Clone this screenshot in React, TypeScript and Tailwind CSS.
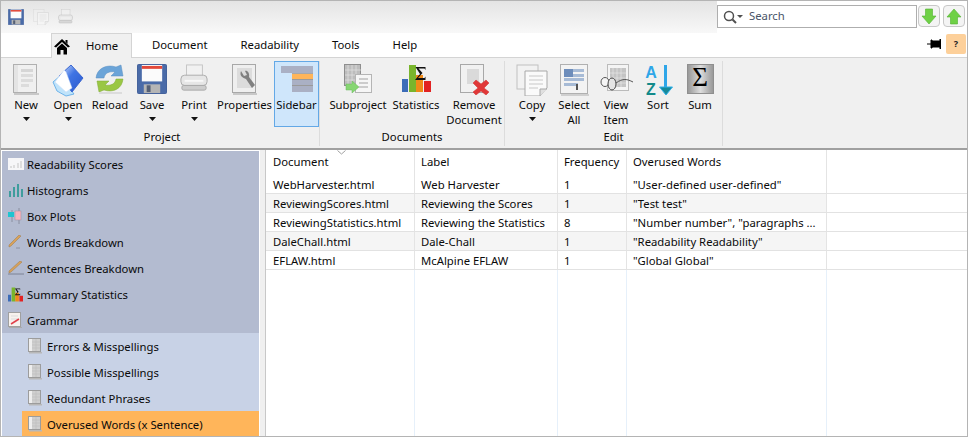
import React from "react";

const font = { fontFamily: '"Noto Sans", "Open Sans", sans-serif' };

function Caret() {
  return <svg width="7" height="4" viewBox="0 0 7 4" className="block"><path d="M0 0h7L3.5 4z" fill="#111" /></svg>;
}

function Ic({ w, h, vb, children }: { w: number; h: number; vb?: string; children: React.ReactNode }) {
  return <svg width={w} height={h} viewBox={vb ?? `0 0 ${w} ${h}`}>{children}</svg>;
}

function NewIcon() {
  return (
    <Ic w={26} h={31}>
      <rect x="0.5" y="0.5" width="23" height="28" fill="#f0f0f0" stroke="#b0b0b0" />
      <rect x="1" y="1" width="4" height="27" fill="#e4e4e4" />
      <rect x="8" y="5" width="12" height="3" fill="#d6d6d6" />
      <rect x="8" y="10" width="12" height="3" fill="#dcdcdc" />
      <rect x="8" y="15" width="12" height="3" fill="#dcdcdc" />
      <rect x="8" y="20" width="8" height="3" fill="#dcdcdc" />
      <rect x="1" y="29" width="25" height="2" fill="#c8c8c8" />
    </Ic>
  );
}
function OpenIcon() {
  return (
    <Ic w={32} h={33}>
      <defs><linearGradient id="og" x1="0" y1="0" x2="1" y2="1"><stop offset="0" stopColor="#dfeaff" /><stop offset="0.45" stopColor="#3f74e4" /><stop offset="1" stopColor="#2a58cc" /></linearGradient></defs>
      <path d="M1 18 L8 12 L22 30 L14 32 L5 27z" fill="#bfe3fa" stroke="#6fb4ea" />
      <path d="M19 1 L31 14 L20 28 L7 12z" fill="url(#og)" stroke="#3a66d0" />
      <path d="M3 18 L12 6 L14 8 L20 24 L14 28z" fill="#fff" stroke="#c8dcf8" strokeWidth=".5" />
    </Ic>
  );
}
function ReloadIcon() {
  return (
    <Ic w={30} h={31}>
      <path d="M1 14 C2 4 12 0 21 3 L26 1 L28 12 L16 12 L20 8 C14 7 10 9 9 14z" fill="#6ba4d8" stroke="#5a8fc0" strokeWidth=".5" />
      <path d="M28 15 C27 25 18 29 9 26 L4 28 L2 17 L14 17 L10 21 C16 22 20 20 21 15z" fill="#9ac744" stroke="#7ea832" strokeWidth=".5" />
      <rect x="4" y="28" width="23" height="2" fill="#dcdcdc" />
    </Ic>
  );
}
function SaveIcon({ s = 30 }: { s?: number }) {
  return (
    <svg width={s} height={s} viewBox="0 0 31 31">
      <rect x="0.5" y="0.5" width="30" height="30" rx="1" fill="#4a6ba8" stroke="#3f5e99" />
      <rect x="5" y="1" width="21" height="17" fill="#fbfbfb" />
      <rect x="5" y="2" width="21" height="3" fill="#e2483a" />
      <rect x="7" y="21" width="17" height="9" fill="#b5b5b5" />
      <rect x="10" y="22" width="4" height="7" fill="#545f75" />
    </svg>
  );
}
function PrintIcon({ s = 28 }: { s?: number }) {
  return (
    <svg width={s} height={s} viewBox="0 0 30 30">
      <rect x="7" y="1" width="17" height="13" fill="#f1f1f1" stroke="#c4c4c4" />
      <rect x="1" y="12" width="28" height="11" rx="4" fill="#e6e6e6" stroke="#a9a9a9" />
      <rect x="2" y="23" width="26" height="5" rx="2" fill="#cdcdcd" stroke="#a8a8a8" />
      <rect x="5" y="17" width="20" height="2" fill="#f8f8f8" />
    </svg>
  );
}
function PropertiesIcon() {
  return (
    <Ic w={25} h={31}>
      <rect x="0.5" y="0.5" width="23" height="28" fill="#efefef" stroke="#a8a8a8" />
      <rect x="5" y="4" width="15" height="20" fill="#dcdcdc" />
      <path d="M9 7 C7 12 11 14 14 15 L20 24 L23 21 L17 13 C18 9 15 6 13 7 L15 11 L12 12z" fill="#808080" />
      <rect x="1" y="29" width="24" height="2" fill="#c8c8c8" />
    </Ic>
  );
}
function SidebarIcon() {
  return (
    <div className="flex flex-col w-[32px] h-[26px] items-end mt-[2px]">
      <div className="w-full h-[7px] bg-[#aab0c4]" />
      <div className="w-[21px] h-[6px] bg-[#ffb55a] border-t border-[#a8a8a8]" />
      <div className="w-[21px] h-[6px] bg-[#aab0c4] border-t border-[#9a9a9a]" />
      <div className="w-[21px] h-[7px] bg-[#aab0c4] border-t border-[#9a9a9a]" />
    </div>
  );
}
function SubprojectIcon() {
  return (
    <Ic w={28} h={29}>
      <rect x="0.5" y="0.5" width="16" height="21" fill="#bdbdbd" stroke="#8e8e8e" />
      <path d="M4 1v21M8 1v21M12 1v21M1 6h16M1 11h16M1 16h16" stroke="#e4e4e4" strokeWidth=".7" />
      <rect x="11.5" y="10.5" width="16" height="18" fill="#f6f6f6" stroke="#b5b5b5" />
      <rect x="15" y="14" width="9" height="2" fill="#ccc" />
      <rect x="15" y="18" width="9" height="2" fill="#ccc" />
      <rect x="15" y="22" width="9" height="2" fill="#ccc" />
      <path d="M2 20h6v-3l7 6-7 6v-3H2z" fill="#86d672" stroke="#68b85c" strokeWidth=".5" />
    </Ic>
  );
}
function StatisticsIcon({ s = 29 }: { s?: number }) {
  return (
    <div className="relative shrink-0" style={{ width: s, height: s }}>
      <svg width={s} height={s} viewBox="0 0 29 29" className="block">
        <rect x="0" y="15" width="6" height="13" fill="#3c6cb8" />
        <rect x="7" y="1" width="7" height="27" fill="#79b52c" />
        <rect x="14" y="11" width="7" height="17" fill="#f08a18" />
        <rect x="22" y="17" width="7" height="11" fill="#e22222" />
        <path d="M13.5 3h10v3l-1-1.500h-6l4 4.500-4.500 5h6.500l1-1.500v3.500h-10.500l5-6z" fill="#111" />
      </svg>
    </div>
  );
}
function RemoveIcon() {
  return (
    <Ic w={29} h={31}>
      <rect x="0.5" y="0.5" width="23" height="28" fill="#f1f1f1" stroke="#a8a8a8" />
      <rect x="7" y="5" width="12" height="15" fill="#dadada" />
      <path d="M13 19l3-3 5 4 5-4 3 3-5 5 5 4-3 3-5-4-5 4-3-3 5-4z" fill="#e03838" stroke="#d02c2c" strokeWidth=".5" />
    </Ic>
  );
}
function CopyIcon({ s = 32 }: { s?: number }) {
  return (
    <svg width={s} height={s} viewBox="0 0 32 32">
      <rect x="1" y="1" width="21" height="24" fill="#f2f2f2" stroke="#c0c0c0" />
      <path d="M9 7h22v17l-7 8H9z" fill="#fafafa" stroke="#a8a8a8" />
      <path d="M13 12h14M13 16h14M13 20h14M13 24h9" stroke="#c8c8c8" strokeWidth="1.2" />
      <path d="M24 32v-7h7" fill="#e0e0e0" stroke="#a8a8a8" />
    </svg>
  );
}
function SelectAllIcon() {
  return (
    <Ic w={29} h={32}>
      <rect x="0.5" y="0.5" width="27" height="29" fill="#f3f3f3" stroke="#b0b0b0" />
      <rect x="4" y="5" width="9" height="8" fill="#6d8dbb" />
      <rect x="13" y="5" width="11" height="3" fill="#a7bbd6" />
      <rect x="13" y="10" width="11" height="3" fill="#a7bbd6" />
      <rect x="4" y="14" width="20" height="3" fill="#a7bbd6" />
      <rect x="4" y="19" width="14" height="3" fill="#a7bbd6" />
      <rect x="16" y="20" width="2" height="6" fill="#555" />
      <rect x="1" y="30" width="28" height="2" fill="#cfcfcf" />
    </Ic>
  );
}
function ViewItemIcon() {
  return (
    <Ic w={33} h={28}>
      <rect x="7.5" y="0.5" width="21" height="26" fill="#f4f4f4" stroke="#bbb" />
      <rect x="10" y="4" width="16" height="19" fill="#c4c4c4" />
      <path d="M13 4v19M17 4v19M21 4v19M10 9h16M10 14h16M10 19h16" stroke="#e6e6e6" strokeWidth=".7" />
      <ellipse cx="5" cy="18" rx="4" ry="4.500" fill="#f5f5f5" stroke="#555" />
      <ellipse cx="12" cy="20" rx="4" ry="6" fill="#e4e4e4" stroke="#444" />
      <path d="M16 19 C23 14 27 15 33 18" fill="none" stroke="#555" />
    </Ic>
  );
}
function SortIcon() {
  return (
    <div className="w-[29px] h-[33px] flex items-start">
      <div className="w-[15px] flex flex-col items-center font-bold text-[16px] leading-[17px]" style={{ fontFamily: '"Liberation Sans", sans-serif' }}>
        <span className="text-[#2fa6e8]">A</span>
        <span className="text-[#128a8a]">Z</span>
      </div>
      <Ic w={14} h={33}>
        <rect x="5" y="1" width="3" height="23" fill="#2fa6e8" />
        <path d="M0.500 23h13l-6.500 8z" fill="#178a9a" stroke="#2fb0ea" />
      </Ic>
    </div>
  );
}
function SumIcon() {
  return (
    <div className="w-[27px] h-[30px] border border-[#8f8f8f] flex items-center justify-center bg-gradient-to-r from-[#999] via-[#ddd] to-[#999]">
      <span className="text-[27px] leading-none text-black pb-[3px]" style={{ fontFamily: '"Liberation Serif", serif' }}>Σ</span>
    </div>
  );
}
function HomeIcon() {
  return (
    <svg width="16" height="17" viewBox="0 0 16 17">
      <path d="M8 1 L16 8.5 L14 9.500 L8 4 L2 9.500 L0 8.500z" fill="#000" />
      <path d="M11.500 2h2v4l-2-2z" fill="#000" />
      <path d="M3 10 L8 5.500 L13 10 V16.500 H9.500 V12 H6.500 V16.500 H3z" fill="#000" />
    </svg>
  );
}
function ArrowButton({ up }: { up?: boolean }) {
  return (
    <div className="w-[22px] h-[22px] rounded-[4px] border border-[#c8c8c8] bg-[#f4f4f4] flex items-center justify-center">
      <svg width="16" height="17" viewBox="0 0 16 17">
        {up
          ? <path d="M8 1l7 8h-3.500v7h-7V9H1z" fill="#6fd146" stroke="#52b030" strokeWidth=".6" />
          : <path d="M4.500 1h7v7H15l-7 8-7-8h3.500z" fill="#6fd146" stroke="#52b030" strokeWidth=".6" />}
      </svg>
    </div>
  );
}

function RibbonButton({ label, icon, w, caret, active }: { label: React.ReactNode; icon: React.ReactNode; w: string; caret?: boolean; active?: boolean }) {
  return (
    <div className={`${w} h-[66px] flex flex-col items-center shrink-0 ${active ? "bg-[#cfe6fb] border border-[#63a8e6]" : ""}`}>
      <div className={`h-[35px] flex items-start justify-center ${active ? "pt-[2px]" : "pt-[3px]"}`}>{icon}</div>
      <div className={`text-center text-[11.3px] leading-[15px] text-[#0a0a0a] whitespace-nowrap ${active ? "" : "mt-[1px]"}`}>{label}</div>
      {caret && <div className="mt-[5px]"><Caret /></div>}
    </div>
  );
}

function Group({ title, children, w }: { title: string; children: React.ReactNode; w: string }) {
  return (
    <div className={`${w} flex flex-col items-center border-r border-[#dcdcdc] h-[85px] shrink-0`}>
      <div className="flex h-[66px] w-full">{children}</div>
      <div className="text-[11.3px] leading-[16px] text-[#0a0a0a] mt-[2px]">{title}</div>
    </div>
  );
}

function DocGlyph() {
  return (
    <svg width="14" height="16" viewBox="0 0 14 16">
      <rect x="0.500" y="0.500" width="12" height="13" fill="#cfcfcf" stroke="#9c9c9c" />
      <rect x="1" y="1" width="3" height="12" fill="#eeeeee" />
      <path d="M4 4h8M4 7h8M4 10h8M8 1v12" stroke="#bdbdbd" strokeWidth=".7" />
      <rect x="1" y="14" width="13" height="1.500" fill="#b8b8b8" />
    </svg>
  );
}

const mainIcons: Record<string, React.ReactNode> = {
  scores: (
    <svg width="16" height="12" viewBox="0 0 16 12">
      <rect width="16" height="12" fill="#f6f6f8" />
      <path d="M3 10V8M6 10V7M10 10V5M13 10V3" stroke="#c4c4c4" strokeWidth="1" />
    </svg>
  ),
  hist: (
    <svg width="16" height="14" viewBox="0 0 16 14">
      <path d="M1 8h2v6H1zM5 4h2v10H5zM9 1h2v13H9zM13 6h2v8h-2z" fill="#3f9d9d" />
    </svg>
  ),
  box: (
    <svg width="14" height="16" viewBox="0 0 14 16">
      <path d="M4 2v12M11 0v16" stroke="#8a8fa0" />
      <rect x="0" y="4" width="6" height="5" fill="#1fc4d0" />
      <rect x="7" y="3" width="6" height="9" fill="#f7b3bc" stroke="#9a8e9e" strokeWidth=".5" />
    </svg>
  ),
  words: (
    <svg width="14" height="14" viewBox="0 0 14 14">
      <path d="M1 10L11 0l2 1L3 11l-2 1z" fill="#d9a25a" stroke="#9c7a4c" strokeWidth=".5" />
      <path d="M8 13h4" stroke="#8c92a4" />
    </svg>
  ),
  sentences: (
    <svg width="16" height="14" viewBox="0 0 16 14">
      <path d="M1 10L12 0l2 1L3 11l-2 1z" fill="#d9a25a" stroke="#9c7a4c" strokeWidth=".5" />
      <path d="M0 13h16" stroke="#7c8294" />
    </svg>
  ),
  summary: <StatisticsIcon s={15} />,
  grammar: (
    <svg width="14" height="16" viewBox="0 0 14 16">
      <rect x="0.500" y="0.500" width="12" height="14" fill="#f7f2ee" stroke="#a0a0a0" />
      <path d="M3 4h7M3 7h7" stroke="#ddd" />
      <path d="M3 12L11 7" stroke="#e0404a" strokeWidth="1.500" />
      <rect x="1" y="15" width="13" height="1" fill="#aaa" />
    </svg>
  ),
};

function SideMain({ icon, label }: { icon: string; label: string }) {
  return (
    <div className="h-[26px] flex items-center">
      <div className="w-[25px] pl-[6px] shrink-0 flex items-center justify-start">{mainIcons[icon]}</div>
      <span className="text-[11.3px] text-[#0a0a0a] whitespace-nowrap pt-[2px]">{label}</span>
    </div>
  );
}

function SideSub({ label, selected }: { label: string; selected?: boolean }) {
  return (
    <div className={`h-[26px] ml-[20px] flex items-center ${selected ? "bg-[#ffb55a]" : ""}`}>
      <div className="w-[25px] pl-[6px] shrink-0 flex items-center"><DocGlyph /></div>
      <span className="text-[11.3px] text-[#0a0a0a] whitespace-nowrap pt-[2px]">{label}</span>
    </div>
  );
}

const rows = [
  ["WebHarvester.html", "Web Harvester", "1", "\"User-defined user-defined\""],
  ["ReviewingScores.html", "Reviewing the Scores", "1", "\"Test test\""],
  ["ReviewingStatistics.html", "Reviewing the Statistics", "8", "\"Number number\", \"paragraphs ..."],
  ["DaleChall.html", "Dale-Chall", "1", "\"Readability Readability\""],
  ["EFLAW.html", "McAlpine EFLAW", "1", "\"Global Global\""],
];

const cols = ["w-[149px] pl-[7px]", "w-[143px] pl-[6px]", "w-[69px] pl-[6px]", "w-[200px] pl-[6px]"];

export default function App() {
  return (
    <div className="w-[968px] h-[437px] overflow-hidden bg-white border border-[#b4b4b4] flex flex-col" style={font}>
      <div className="h-[32px] shrink-0 flex items-start">
        <div className="w-[716px] h-[32px] bg-gradient-to-b from-[#e4e4e4] to-[#f8f8f8] flex items-center gap-[9px] pl-[7px] pb-[1px]">
          <SaveIcon s={16} />
          <div className="opacity-40"><CopyIcon s={16} /></div>
          <div className="opacity-70"><PrintIcon s={15} /></div>
        </div>
        <div className="flex-1 flex items-start gap-[1px] mt-[4px]">
          <div className="w-[200px] h-[23px] border border-[#aeaeae] flex items-center pl-[5px] bg-white">
            <svg width="20" height="14" viewBox="0 0 20 14">
              <circle cx="6" cy="6" r="4.500" fill="none" stroke="#505050" strokeWidth="1.500" />
              <path d="M9.500 9.500L13 13" stroke="#505050" strokeWidth="2" />
              <path d="M14 5h6l-3 3z" fill="#505050" />
            </svg>
            <span className="ml-[6px] text-[11.3px] text-[#4a5568]">Search</span>
          </div>
          <ArrowButton />
          <div className="ml-[2px]"><ArrowButton up /></div>
        </div>
      </div>

      <div className="h-[25px] shrink-0 flex items-stretch border-b border-[#d4d4d4] bg-white relative">
        <div className="w-[50px]" />
        <div className="w-[81px] h-[25px] bg-[#f0f0f0] border-t border-x border-[#d4d4d4] flex items-center pl-[2px] relative">
          <HomeIcon />
          <span className="ml-[16px] text-[11.3px] text-[#0a0a0a] pt-[1px]">Home</span>
        </div>
        <span className="ml-[20px] self-center text-[11.3px] text-[#0a0a0a] pt-[1px]">Document</span>
        <span className="ml-[33px] self-center text-[11.3px] text-[#0a0a0a] pt-[1px]">Readability</span>
        <span className="ml-[33px] self-center text-[11.3px] text-[#0a0a0a] pt-[1px]">Tools</span>
        <span className="ml-[33px] self-center text-[11.3px] text-[#0a0a0a] pt-[1px]">Help</span>
        <div className="ml-auto flex items-center gap-[5px] pb-[3px]">
          <svg width="14" height="10" viewBox="0 0 14 10">
            <path d="M0 5h3M3 5h2M4 1h1v8H4zM5 2h8v6H5zM13 0h1v10h-1z" stroke="#000" strokeWidth="1" fill="#000" />
          </svg>
          <div className="w-[20px] h-[20px] bg-[#fdd09a] rounded-[2px] flex items-center justify-center text-[9px] font-bold text-[#222] mr-[1px]">?</div>
        </div>
      </div>

      <div className="h-[92px] shrink-0 bg-[#f0f0f0] border-b-2 border-[#a0a0a0] flex items-start pt-[3px] pl-[4px]">
        <Group title="Project" w="w-[315px]">
          <RibbonButton label="New" icon={<NewIcon />} w="w-[42px]" caret />
          <RibbonButton label="Open" icon={<OpenIcon />} w="w-[42px]" caret />
          <RibbonButton label="Reload" icon={<ReloadIcon />} w="w-[42px]" />
          <RibbonButton label="Save" icon={<SaveIcon />} w="w-[42px]" caret />
          <RibbonButton label="Print" icon={<PrintIcon />} w="w-[42px]" caret />
          <RibbonButton label="Properties" icon={<PropertiesIcon />} w="w-[59px]" />
          <RibbonButton label="Sidebar" icon={<SidebarIcon />} w="w-[45px]" active />
        </Group>
        <Group title="Documents" w="w-[185px]">
          <div className="w-[9px] shrink-0" />
          <RibbonButton label="Subproject" icon={<SubprojectIcon />} w="w-[58px]" />
          <RibbonButton label="Statistics" icon={<StatisticsIcon />} w="w-[58px]" />
          <RibbonButton label={<>Remove<br />Document</>} icon={<RemoveIcon />} w="w-[58px]" />
        </Group>
        <Group title="Edit" w="w-[218px]">
          <div className="w-[6px] shrink-0" />
          <RibbonButton label="Copy" icon={<CopyIcon />} w="w-[42px]" caret />
          <RibbonButton label={<>Select<br />All</>} icon={<SelectAllIcon />} w="w-[42px]" />
          <RibbonButton label={<>View<br />Item</>} icon={<ViewItemIcon />} w="w-[42px]" />
          <RibbonButton label="Sort" icon={<SortIcon />} w="w-[42px]" />
          <RibbonButton label="Sum" icon={<SumIcon />} w="w-[42px]" />
        </Group>
      </div>

      <div className="flex-1 flex min-h-0">
        <div className="w-[259px] shrink-0 flex flex-col pl-[1px] pt-[1px] border-r border-white">
          <div className="bg-[#b3bbd0]">
            <SideMain icon="scores" label="Readability Scores" />
            <SideMain icon="hist" label="Histograms" />
            <SideMain icon="box" label="Box Plots" />
            <SideMain icon="words" label="Words Breakdown" />
            <SideMain icon="sentences" label="Sentences Breakdown" />
            <SideMain icon="summary" label="Summary Statistics" />
            <SideMain icon="grammar" label="Grammar" />
          </div>
          <div className="bg-[#c8d2e6] flex-1">
            <SideSub label="Errors & Misspellings" />
            <SideSub label="Possible Misspellings" />
            <SideSub label="Redundant Phrases" />
            <SideSub label="Overused Words (x Sentence)" selected />
          </div>
        </div>
        <div className="w-[5px] shrink-0 bg-[#f0f0f0]" />
        <div className="flex-1 flex flex-col border-l border-[#c8c8c8] min-w-0 relative">
          <div className="h-[25px] flex shrink-0">
            {["Document", "Label", "Frequency", "Overused Words"].map((h, i) => (
              <div key={h} className={`${cols[i]} shrink-0 border-r border-[#e4e4e4] pt-[4px] text-[11.3px] text-[#0a0a0a] relative`}>
                {h}
                {i === 0 && (
                  <svg width="9" height="5" viewBox="0 0 9 5" className="absolute left-[71px] top-0">
                    <path d="M0.500 0.500L4.500 4L8.500 0.500" fill="none" stroke="#a0a0a0" />
                  </svg>
                )}
              </div>
            ))}
          </div>
          {rows.map((r, ri) => (
            <div key={r[0]} className="h-[19px] flex shrink-0 border-b border-[#e2e2e2]">
              {r.map((c, i) => (
                <div key={i} className={`${cols[i]} shrink-0 border-r border-[#e4e4e4] text-[11.3px] leading-[19px] text-[#0a0a0a] whitespace-nowrap overflow-hidden ${ri % 2 === 1 ? "bg-[#f5f5f5]" : ""}`}>{c}</div>
              ))}
            </div>
          ))}
          <div className="flex-1 flex">
            {cols.map((c) => <div key={c} className={`${c} shrink-0 border-r border-[#e6f0fa]`} />)}
          </div>
        </div>
      </div>
    </div>
  );
}
